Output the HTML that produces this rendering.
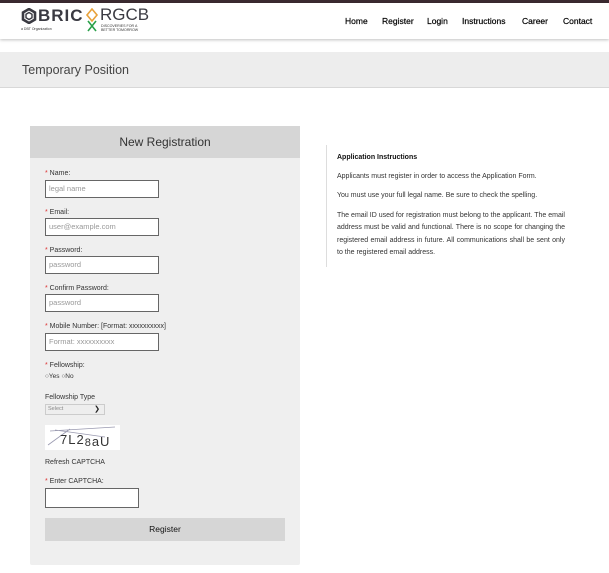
<!DOCTYPE html>
<html><head><style>
*{margin:0;padding:0;box-sizing:border-box}
body{width:609px;height:573px;background:#fff;font-family:"Liberation Sans",sans-serif;position:relative;overflow:hidden;color:#333}
.a{position:absolute}
.top{left:0;top:0;width:609px;height:3px;background:#3b2a31}
.hdr{left:0;top:3px;width:609px;height:36px;background:#fff;box-shadow:0 1px 3px rgba(0,0,0,.25)}
.nav{top:16px;font-size:8.5px;color:#000;-webkit-text-stroke:0.2px #000}
.band{left:0;top:52px;width:609px;height:36px;background:#ededed;border-bottom:1px solid #d8d8d8}
.panel{left:30px;top:126px;width:270px;height:439px;background:#efefef;border-radius:2px}
.ph{left:30px;top:126px;width:270px;height:32px;background:#d6d6d6;text-align:center;font-size:12px;line-height:32px;color:#333}
.lb{left:45px;font-size:7px;color:#333}
.lb b{color:#d33;font-weight:normal}
.in{left:45px;width:114px;height:18px;border:1.5px solid #666;background:#fff;font-size:7.5px;color:#999;padding-left:3px;line-height:15px}
.r{font-size:6.5px;color:#333;line-height:10.5px}
</style></head><body>
<div class="a top"></div>
<div class="a hdr"></div>
<svg class="a" style="left:21px;top:8px" width="16" height="16" viewBox="0 0 16 16"><polygon points="8,1 14,4.5 14,11.5 8,15 2,11.5 2,4.5" fill="none" stroke="#3a3a42" stroke-width="2.6"/><polygon points="8,4.5 11,6.3 11,9.7 8,11.5 5,9.7 5,6.3" fill="none" stroke="#3a3a42" stroke-width="1.4"/></svg>
<div class="a" style="left:38px;top:6px;font-size:17px;font-weight:bold;color:#3a3a42;letter-spacing:1px">BRIC</div>
<div class="a" style="left:21px;top:27px;font-size:3.5px;color:#333">a DBT Organization</div>
<svg class="a" style="left:85px;top:8px" width="14" height="24" viewBox="0 0 14 24"><path d="M7 1 L12 7 L7 13 L2 7 Z" fill="none" stroke="#e8a13a" stroke-width="1.6"/><path d="M3 13 Q7 18 11 23 M11 13 Q7 18 3 23" fill="none" stroke="#2aa04a" stroke-width="1.6"/></svg>
<div class="a" style="left:100px;top:5px;font-size:17px;color:#3a3a42">RGCB</div>
<div class="a" style="left:101px;top:24px;font-size:3.6px;color:#333;line-height:4px">DISCOVERIES FOR A<br>BETTER TOMORROW</div>
<div class="a nav" style="left:345px">Home</div>
<div class="a nav" style="left:382px">Register</div>
<div class="a nav" style="left:427px">Login</div>
<div class="a nav" style="left:462px">Instructions</div>
<div class="a nav" style="left:522px">Career</div>
<div class="a nav" style="left:563px">Contact</div>
<div class="a band"></div>
<div class="a" style="left:22px;top:63px;font-size:12.5px;color:#444">Temporary Position</div>
<div class="a panel"></div>
<div class="a ph">New Registration</div>
<div class="a lb" style="top:170px"><b>*</b> Name:</div>
<div class="a in" style="top:180px">legal name</div>
<div class="a lb" style="top:209px"><b>*</b> Email:</div>
<div class="a in" style="top:218px">user@example.com</div>
<div class="a lb" style="top:247px"><b>*</b> Password:</div>
<div class="a in" style="top:256px">password</div>
<div class="a lb" style="top:285px"><b>*</b> Confirm Password:</div>
<div class="a in" style="top:294px">password</div>
<div class="a lb" style="top:323px"><b>*</b> Mobile Number: [Format: xxxxxxxxxx]</div>
<div class="a in" style="top:333px">Format: xxxxxxxxxx</div>
<div class="a lb" style="top:362px"><b>*</b> Fellowship:</div>
<div class="a r" style="left:45px;top:372px">○Yes ○No</div>
<div class="a lb" style="top:394px">Fellowship Type</div>
<div class="a" style="left:45px;top:404px;width:60px;height:11px;border:1px solid #ccc;background:#eee;font-size:5.5px;color:#888;padding-left:2px;line-height:9px">Select<span style="position:absolute;right:4px;top:0;color:#222;font-size:7px">&#10095;</span></div>
<div class="a" style="left:45px;top:425px;width:75px;height:25px;background:#fff;overflow:hidden"><svg width="75" height="25"><path d="M5 6 L70 2 M3 20 L25 4 M10 5 L60 12" stroke="#9a9ab0" stroke-width="0.8" fill="none"/><text x="15" y="19" font-family="Liberation Sans" font-size="13" fill="#333" letter-spacing="1">7L2<tspan font-size="11" dy="2">8</tspan>aU</text></svg></div>
<div class="a lb" style="top:459px">Refresh CAPTCHA</div>
<div class="a lb" style="top:478px"><b>*</b> Enter CAPTCHA:</div>
<div class="a in" style="top:488px;width:94px;height:20px"></div>
<div class="a" style="left:45px;top:518px;width:240px;height:23px;background:#d6d6d6;text-align:center;font-size:8.5px;line-height:23px;color:#111">Register</div>
<div class="a" style="left:326px;top:145px;width:1px;height:122px;background:#ddd"></div>
<div class="a" style="left:337px;top:152px;width:228px;font-size:7px;color:#333;line-height:12.5px;text-align:justify">
<div style="font-weight:bold;color:#111;margin-bottom:6px">Application Instructions</div>
<div style="margin-bottom:7px">Applicants must register in order to access the Application Form.</div>
<div style="margin-bottom:7px">You must use your full legal name. Be sure to check the spelling.</div>
<div>The email ID used for registration must belong to the applicant. The email address must be valid and functional. There is no scope for changing the registered email address in future. All communications shall be sent only to the registered email address.</div>
</div>
</body></html>
